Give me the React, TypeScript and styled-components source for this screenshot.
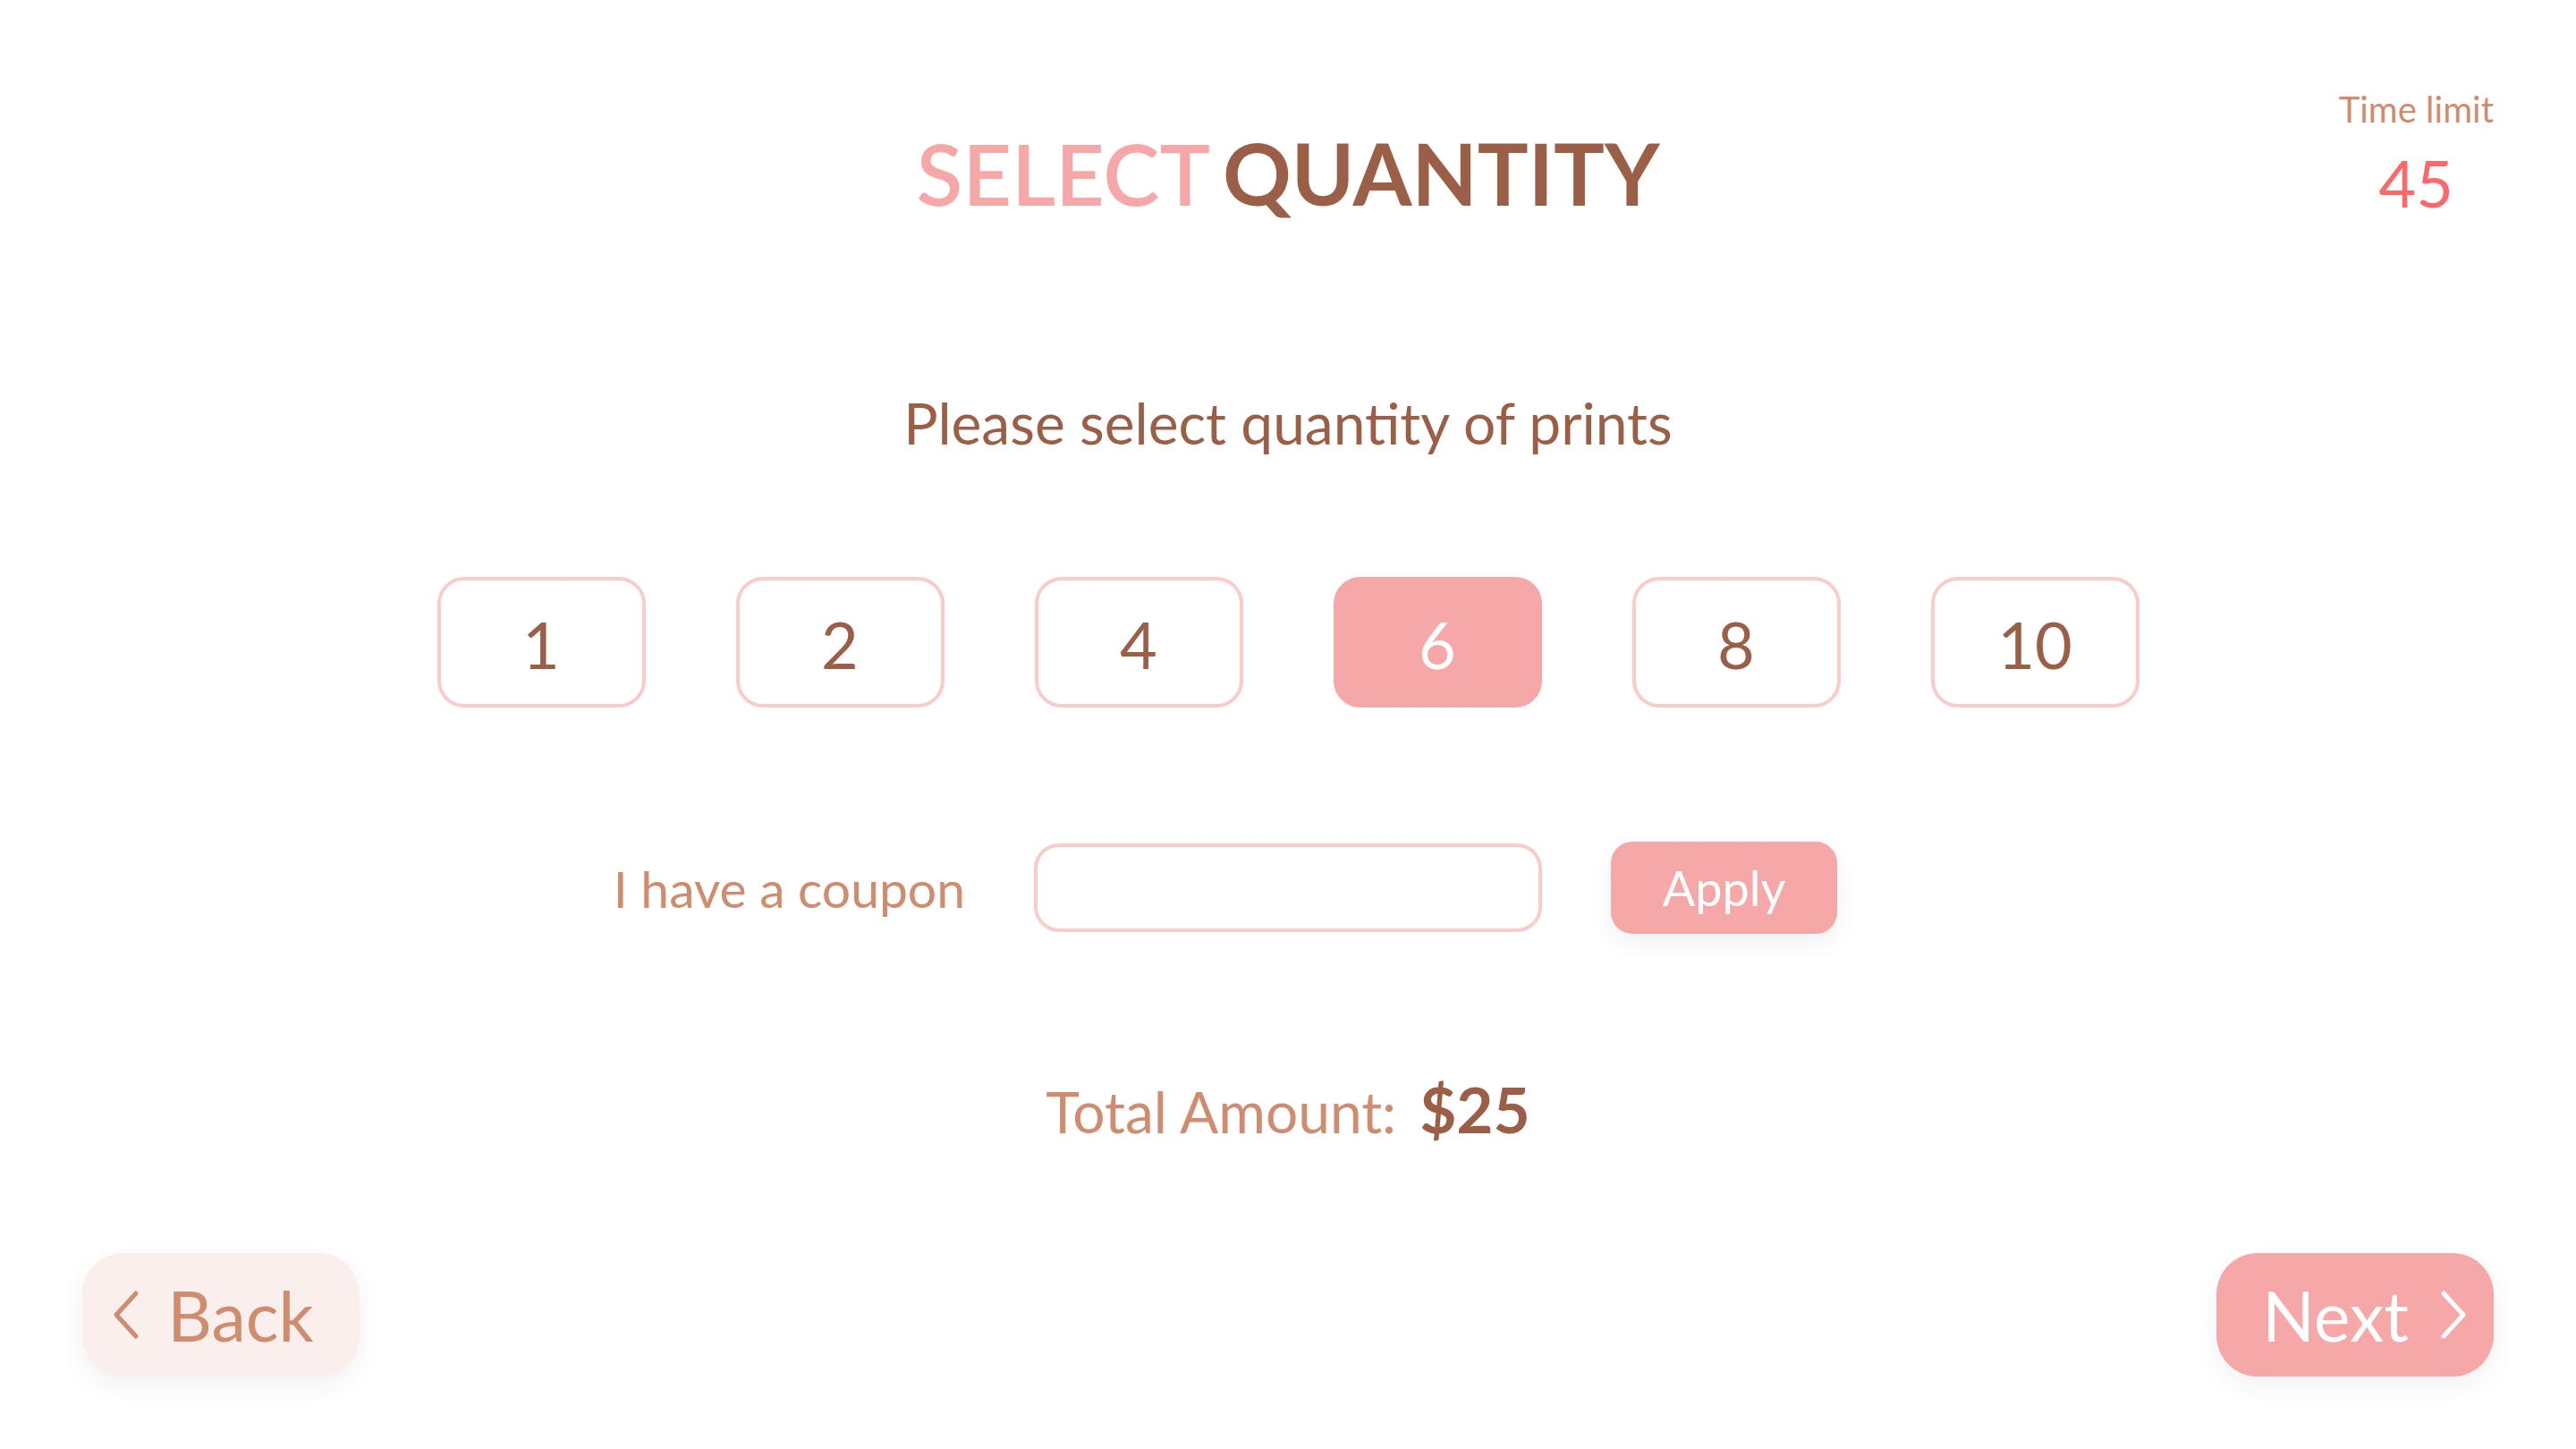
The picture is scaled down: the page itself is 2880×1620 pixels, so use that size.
import styled, { createGlobalStyle } from "styled-components";

const GlobalStyle = createGlobalStyle`
  html, body {
    margin: 0;
    padding: 0;
    background: #ffffff;
  }
  body {
    font-family: "Lato", "Noto Sans", sans-serif;
  }
  * {
    box-sizing: border-box;
  }
`;

const QUANTITIES = [1, 2, 4, 6, 8, 10];

const Page = styled.main`
  width: 2880px;
  height: 1620px;
  padding: 102px 92px 81px;
  display: flex;
  flex-direction: column;
  align-items: center;
  color: #9a5f46;
`;

const Header = styled.header`
  width: 100%;
  display: grid;
  grid-template-columns: 1fr auto 1fr;
  align-items: start;
`;

const Title = styled.h1`
  grid-column: 2;
  margin: 44px 0 0;
  font-size: 95px;
  line-height: 1;
  display: flex;
  gap: 14px;
`;

const TitleWord = styled.span<{ $light?: boolean }>`
  color: ${({ $light }) => ($light ? "#f5a8a7" : "#9a5f46")};
  font-weight: ${({ $light }) => ($light ? 600 : 700)};
`;

const Timer = styled.div`
  grid-column: 3;
  justify-self: end;
  display: flex;
  flex-direction: column;
  align-items: center;
  gap: 26px;
`;

const TimerLabel = styled.span`
  font-size: 40px;
  line-height: 1;
  color: #cf8c6f;
`;

const TimerValue = styled.span`
  font-size: 72px;
  line-height: 1;
  color: #ff6868;
`;

const Subtitle = styled.p`
  margin: 200px 0 0;
  font-size: 64px;
  line-height: 1;
  color: #9a5f46;
`;

const QuantityRow = styled.div`
  margin-top: 140px;
  display: flex;
  gap: 101px;
`;

const QuantityButton = styled.button<{ $active?: boolean }>`
  width: 233px;
  height: 146px;
  border-radius: 30px;
  border: 4px solid ${({ $active }) => ($active ? "#f5a8a7" : "#f9cbc9")};
  background: ${({ $active }) => ($active ? "#f5a8a7" : "#ffffff")};
  color: ${({ $active }) => ($active ? "#ffffff" : "#9a5f46")};
  font-family: inherit;
  font-size: 72px;
  display: flex;
  align-items: center;
  justify-content: center;
  padding: 4px 0 0;
  cursor: pointer;
`;

const CouponRow = styled.div`
  margin-top: 150px;
  width: 100%;
  display: grid;
  grid-template-columns: 1fr auto 1fr;
  align-items: center;
  column-gap: 77px;
`;

const CouponLabel = styled.label`
  justify-self: end;
  font-size: 57px;
  color: #cf8c6f;
`;

const CouponInput = styled.input`
  width: 568px;
  height: 99px;
  border: 4px solid #f9cbc9;
  border-radius: 28px;
  outline: none;
  padding: 0 30px;
  font-family: inherit;
  font-size: 46px;
  color: #9a5f46;
`;

const ApplyButton = styled.button`
  justify-self: start;
  width: 253px;
  height: 103px;
  border: none;
  border-radius: 24px;
  background: #f5a8a7;
  color: #ffffff;
  font-family: inherit;
  font-size: 54px;
  box-shadow: 0 10px 28px rgba(0, 0, 0, 0.06);
  cursor: pointer;
`;

const Total = styled.div`
  margin-top: 160px;
  display: flex;
  align-items: baseline;
  gap: 26px;
  line-height: 1;
`;

const TotalLabel = styled.span`
  font-size: 64px;
  color: #cf8c6f;
`;

const TotalValue = styled.span`
  font-size: 71px;
  font-weight: 700;
  color: #9a5f46;
`;

const Footer = styled.footer`
  margin-top: auto;
  width: 100%;
  display: flex;
  justify-content: space-between;
`;

const NavButton = styled.button<{ $primary?: boolean }>`
  width: 310px;
  height: 138px;
  border: none;
  border-radius: 46px;
  padding: ${({ $primary }) => ($primary ? "0 0 0 22px" : "0 18px 0 0")};
  background: ${({ $primary }) => ($primary ? "#f5a8a7" : "#faefec")};
  color: ${({ $primary }) => ($primary ? "#ffffff" : "#cf8c6f")};
  font-family: inherit;
  font-size: 77px;
  display: flex;
  align-items: center;
  justify-content: center;
  gap: ${({ $primary }) => ($primary ? "34px" : "30px")};
  box-shadow: 0 10px 30px rgba(0, 0, 0, 0.06);
  cursor: pointer;
  svg {
    flex-shrink: 0;
  }
`;

const Chevron = ({ dir }: { dir: "left" | "right" }) => (
  <svg width="32" height="56" viewBox="0 0 32 56" fill="none">
    <path
      d={dir === "left" ? "M27 4 L5 28 L27 52" : "M5 4 L27 28 L5 52"}
      stroke="currentColor"
      strokeWidth="5"
      strokeLinecap="round"
      strokeLinejoin="round"
    />
  </svg>
);

export default function App() {
  const selected = 6;

  return (
    <>
      <GlobalStyle />
      <Page>
        <Header>
          <Title>
            <TitleWord $light>SELECT</TitleWord>
            <TitleWord>QUANTITY</TitleWord>
          </Title>
          <Timer>
            <TimerLabel>Time limit</TimerLabel>
            <TimerValue>45</TimerValue>
          </Timer>
        </Header>

        <Subtitle>Please select quantity of prints</Subtitle>

        <QuantityRow>
          {QUANTITIES.map((q) => (
            <QuantityButton key={q} $active={q === selected}>
              {q}
            </QuantityButton>
          ))}
        </QuantityRow>

        <CouponRow>
          <CouponLabel htmlFor="coupon">I have a coupon</CouponLabel>
          <CouponInput id="coupon" type="text" />
          <ApplyButton>Apply</ApplyButton>
        </CouponRow>

        <Total>
          <TotalLabel>Total Amount:</TotalLabel>
          <TotalValue>$25</TotalValue>
        </Total>

        <Footer>
          <NavButton>
            <Chevron dir="left" />
            Back
          </NavButton>
          <NavButton $primary>
            Next
            <Chevron dir="right" />
          </NavButton>
        </Footer>
      </Page>
    </>
  );
}
